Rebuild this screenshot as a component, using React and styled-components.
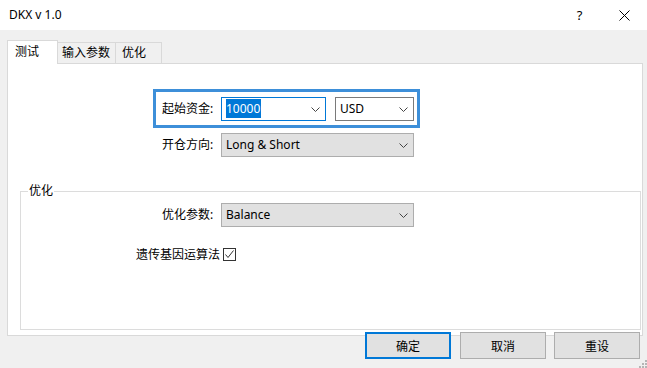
import React from "react";
import styled, { createGlobalStyle } from "styled-components";

const GlobalStyle = createGlobalStyle`
    html, body {
        margin: 0;
        padding: 0;
        background: #f0f0f0;
    }
    body {
        font-family: "Noto Sans", "Noto Sans CJK SC", sans-serif;
        font-size: 12px;
        color: #000;
    }
`;

const Window = styled.div`
    width: 647px;
    height: 368px;
    display: flex;
    flex-direction: column;
    overflow: hidden;
    position: relative;
    background: #f0f0f0;
`;

const TitleBar = styled.div`
    height: 30px;
    flex: none;
    background: #fff;
    display: flex;
    align-items: center;
    padding-left: 9px;

    .title {
        flex: 1;
        line-height: 16px;
    }
`;

const TitleButton = styled.div`
    width: 45px;
    height: 30px;
    display: flex;
    align-items: center;
    justify-content: center;
    font-size: 13px;
    color: #000;
`;

const Body = styled.div`
    flex: 1;
    display: flex;
    flex-direction: column;
    padding: 10px 4px 0 7px;
`;

const TabStrip = styled.div`
    display: flex;
    height: 24px;
    margin-bottom: -1px;
`;

const Tab = styled.div`
    box-sizing: border-box;
    width: ${p => p.$w}px;
    padding-left: ${p => p.$pad}px;
    line-height: ${p => (p.$active ? 22 : 19)}px;
    height: ${p => (p.$active ? 24 : 21)}px;
    margin-top: ${p => (p.$active ? 0 : 2)}px;
    border: 1px solid #d9d9d9;
    border-bottom: none;
    border-left: ${p => (p.$joined ? "none" : "1px solid #d9d9d9")};
    background: ${p => (p.$active ? "#fff" : "#f0f0f0")};
    position: relative;
    z-index: ${p => (p.$active ? 1 : 0)};
    white-space: nowrap;
`;

const Panel = styled.div`
    box-sizing: border-box;
    height: 273px;
    border: 1px solid #d9d9d9;
    background: #fff;
    display: flex;
    flex-direction: column;
    padding: 25px 0 5px 0;
`;

const FocusFrame = styled.div`
    box-sizing: border-box;
    width: 267px;
    height: 39px;
    margin-left: 145px;
    border: 3px solid #3d8fd9;
    display: flex;
    align-items: center;
    padding: 1px 0 0 6px;
`;

const Row = styled.div`
    display: flex;
    align-items: center;
    margin-left: ${p => p.$left}px;
    margin-top: ${p => p.$top}px;
`;

const Label = styled.div`
    width: 59px;
    flex: none;
    line-height: 16px;
    white-space: nowrap;
`;

const Combo = styled.div`
    box-sizing: border-box;
    width: ${p => p.$w}px;
    height: 24px;
    flex: none;
    display: flex;
    align-items: center;
    padding: 0 5px 0 4px;
    margin-left: ${p => p.$ml || 0}px;
    border: 1px solid ${p => (p.$focus ? "#0078d7" : p.$edit ? "#7a7a7a" : "#adadad")};
    background: ${p => (p.$edit ? "#fff" : "#e1e1e1")};

    .value {
        flex: 1;
        line-height: 16px;
        white-space: nowrap;
    }
    .selected {
        background: #0078d7;
        color: #fff;
        padding: 1px 1px 1px 0;
    }
`;

const Group = styled.fieldset`
    flex: 1;
    margin: 26px 1px 0 12px;
    padding: 0;
    border: 1px solid #dcdcdc;
    min-width: 0;

    legend {
        margin-left: 7px;
        padding: 0 1px;
        line-height: 16px;
    }
`;

const CheckBox = styled.span`
    box-sizing: border-box;
    width: 13px;
    height: 13px;
    border: 1px solid #333;
    margin-left: 3px;
    display: inline-flex;
    align-items: center;
    justify-content: center;
    background: #fff;
`;

const ButtonRow = styled.div`
    display: flex;
    justify-content: flex-end;
    gap: 8px;
    margin: -4px 3px 0 0;
    position: relative;
`;

const Button = styled.div`
    box-sizing: border-box;
    width: 86px;
    height: 27px;
    display: flex;
    align-items: center;
    justify-content: center;
    background: #e1e1e1;
    border: ${p => (p.$default ? "2px solid #0078d7" : "1px solid #adadad")};
    margin-right: ${p => p.$mr || 0}px;
`;

const Grip = styled.svg`
    position: absolute;
    right: 0;
    bottom: 0;
`;

const Chevron = () => (
    <svg width="9" height="5" viewBox="0 0 9 5">
        <path d="M0.5 0.5 L4.5 4.5 L8.5 0.5" fill="none" stroke="#444" strokeWidth="1" />
    </svg>
);

const App = () => {
    return (
        <Window>
            <GlobalStyle />
            <TitleBar>
                <div className="title">DKX v 1.0</div>
                <TitleButton>?</TitleButton>
                <TitleButton>
                    <svg width="11" height="11" viewBox="0 0 11 11">
                        <path d="M0.5 0.5 L10.5 10.5 M10.5 0.5 L0.5 10.5" stroke="#000" strokeWidth="1" />
                    </svg>
                </TitleButton>
            </TitleBar>
            <Body>
                <TabStrip>
                    <Tab $active $w={51} $pad={7}>测试</Tab>
                    <Tab $w={58} $pad={4} $joined>输入参数</Tab>
                    <Tab $w={46} $pad={6} $joined>优化</Tab>
                </TabStrip>
                <Panel>
                    <FocusFrame>
                        <Label>起始资金:</Label>
                        <Combo $w={105} $edit $focus>
                            <span className="value"><span className="selected">10000</span></span>
                            <Chevron />
                        </Combo>
                        <Combo $w={79} $edit $ml={9}>
                            <span className="value">USD</span>
                            <Chevron />
                        </Combo>
                    </FocusFrame>
                    <Row $left={154} $top={5}>
                        <Label>开仓方向:</Label>
                        <Combo $w={193}>
                            <span className="value">Long &amp; Short</span>
                            <Chevron />
                        </Combo>
                    </Row>
                    <Group>
                        <legend>优化</legend>
                        <Row $left={141} $top={4}>
                            <Label>优化参数:</Label>
                            <Combo $w={193}>
                                <span className="value">Balance</span>
                                <Chevron />
                            </Combo>
                        </Row>
                        <Row $left={115} $top={21}>
                            <span style={{ lineHeight: "13px" }}>遗传基因运算法</span>
                            <CheckBox>
                                <svg width="11" height="11" viewBox="0 0 11 11">
                                    <path d="M1.5 5.5 L4 8.5 L9.5 1.5" fill="none" stroke="#333" strokeWidth="1" />
                                </svg>
                            </CheckBox>
                        </Row>
                    </Group>
                </Panel>
                <ButtonRow>
                    <Button $default $mr={1}>确定</Button>
                    <Button>取消</Button>
                    <Button>重设</Button>
                </ButtonRow>
            </Body>
            <Grip width="8" height="8" viewBox="0 0 8 8">
                <rect x="6" y="0" width="2" height="2" fill="#b5b5b5" />
                <rect x="3" y="3" width="2" height="2" fill="#b5b5b5" />
                <rect x="6" y="3" width="2" height="2" fill="#b5b5b5" />
                <rect x="0" y="6" width="2" height="2" fill="#b5b5b5" />
                <rect x="3" y="6" width="2" height="2" fill="#b5b5b5" />
                <rect x="6" y="6" width="2" height="2" fill="#b5b5b5" />
            </Grip>
        </Window>
    );
};

export default App;
